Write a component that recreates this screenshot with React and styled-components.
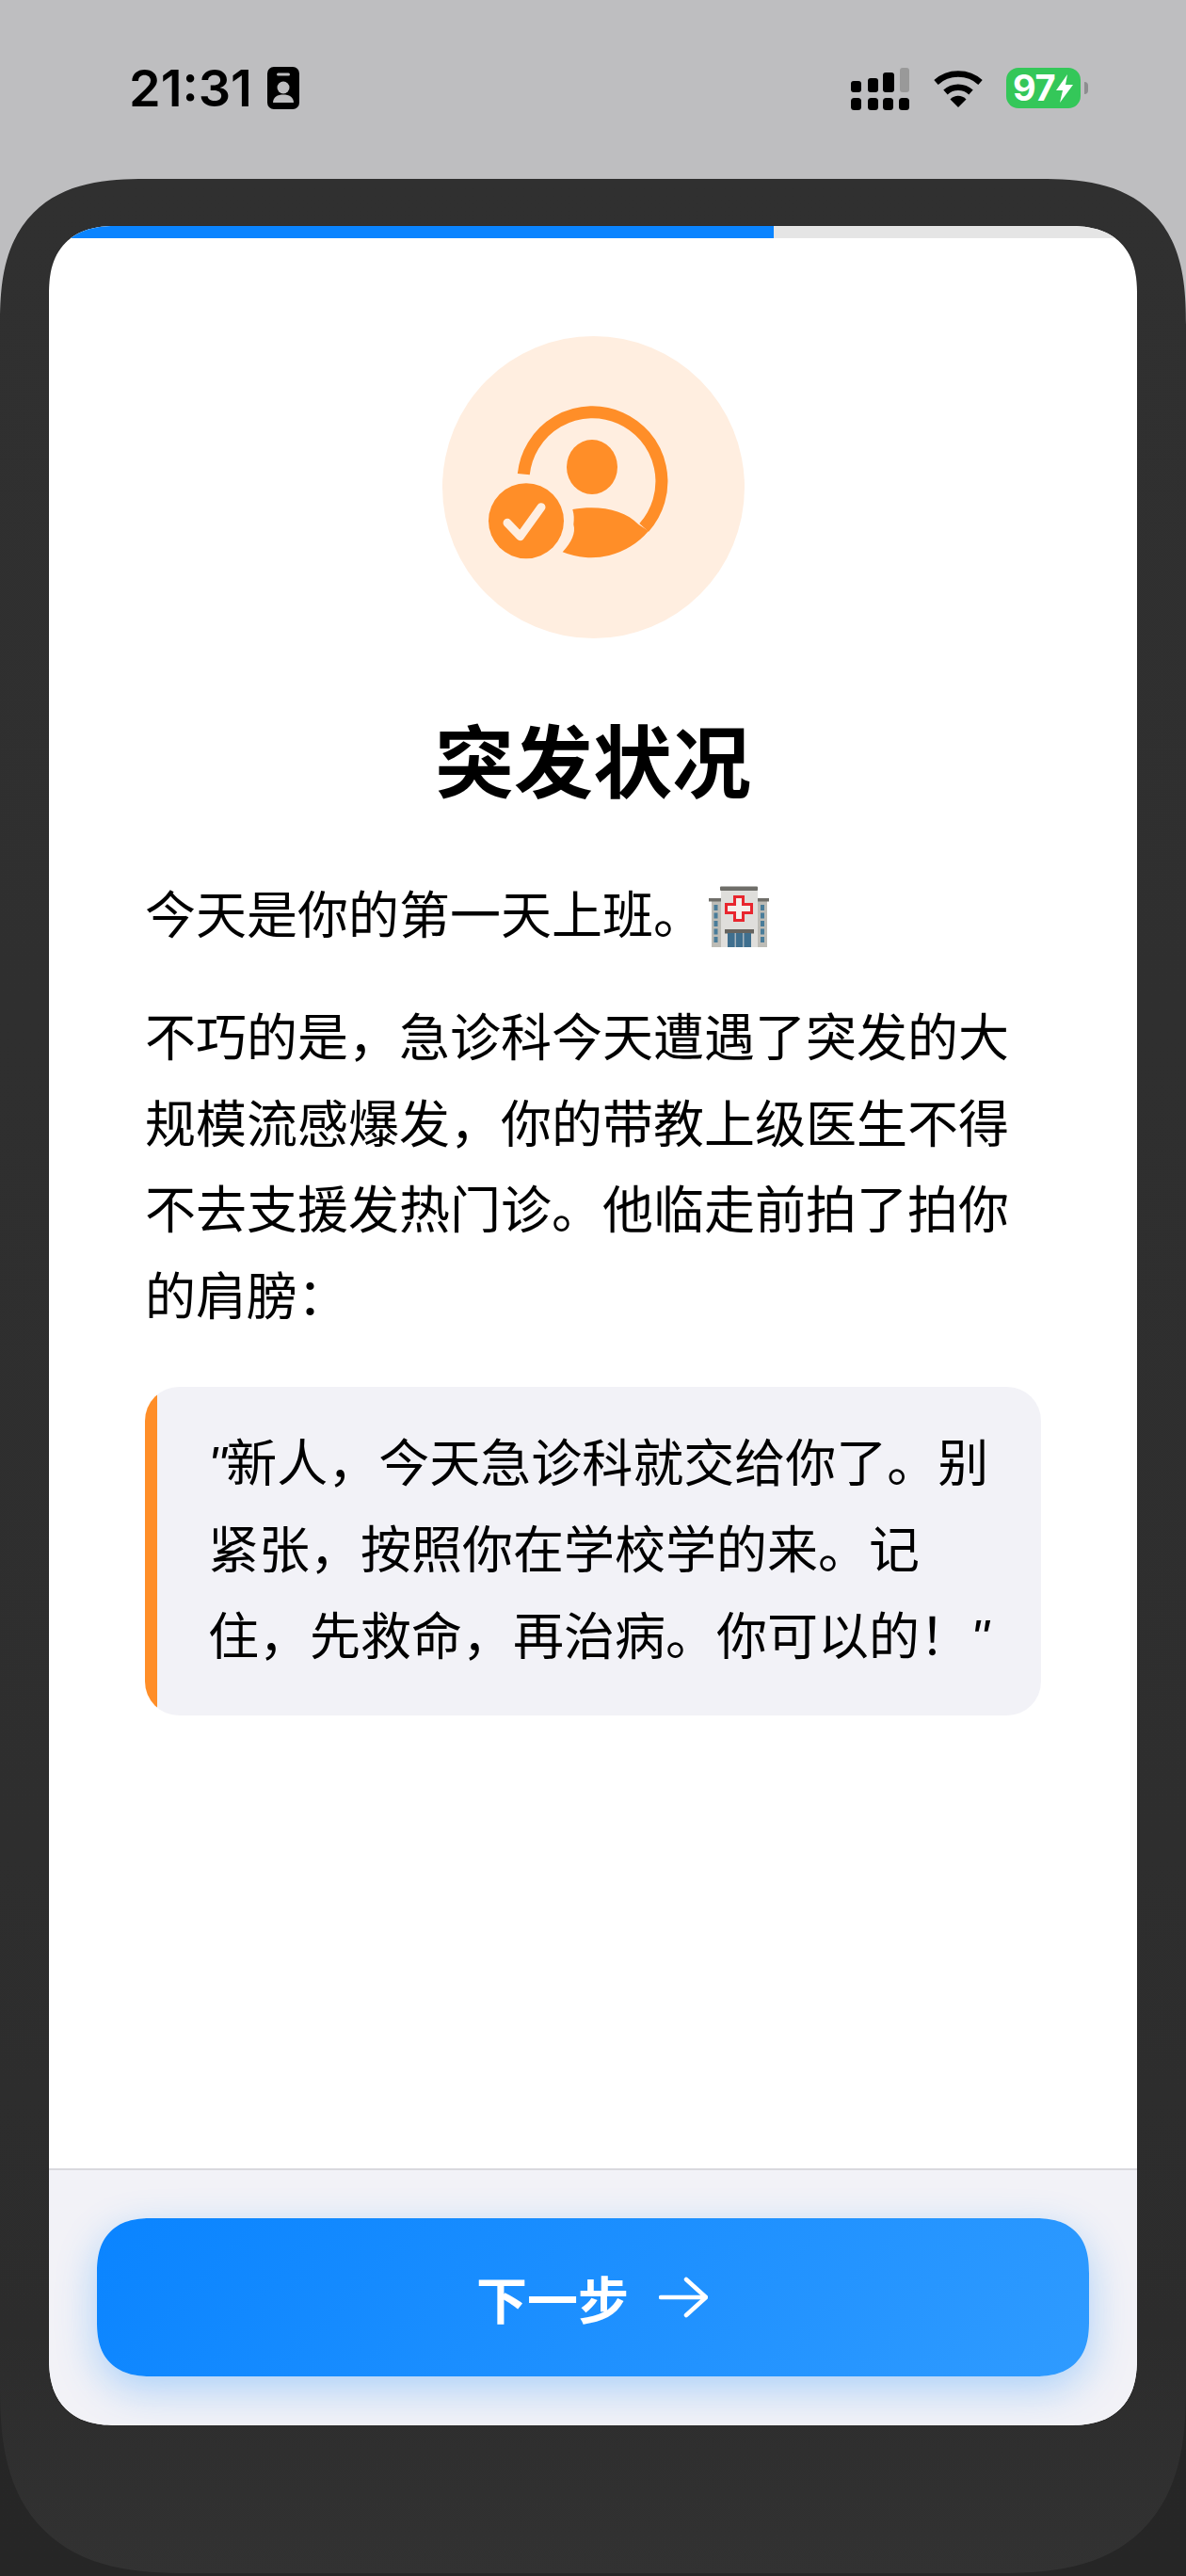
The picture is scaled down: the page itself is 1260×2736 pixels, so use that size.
import React from "react";
import styled, { createGlobalStyle } from "styled-components";

const Global = createGlobalStyle`
  html, body { margin: 0; padding: 0; }
  body {
    width: 1260px;
    height: 2736px;
    overflow: hidden;
    background: linear-gradient(180deg, #bebec0 0, #bebec0 1300px, #272727 1500px, #262626 100%);
    font-family: "Liberation Sans", "Noto Sans CJK SC", sans-serif;
    color: #000;
  }
  * { box-sizing: border-box; }
`;

const Screen = styled.div`
  width: 1260px;
  height: 2733px;
  display: flex;
  flex-direction: column;
`;

const StatusBar = styled.header`
  height: 190px;
  flex: none;
  padding: 71px 112px 0 137px;
  display: flex;
  justify-content: space-between;
  align-items: flex-start;
`;

const TimeGroup = styled.div`
  display: flex;
  align-items: flex-start;
  gap: 16px;
`;

const Time = styled.span`
  font-family: Inter, "Liberation Sans", sans-serif;
  font-weight: 600;
  font-size: 54px;
  line-height: 45px;
  letter-spacing: 0;
  width: 131px;
  white-space: nowrap;
`;

const StatusIcons = styled.div`
  display: flex;
  align-items: flex-start;
`;

const SignalGrid = styled.svg`
  display: block;
  width: 62px;
  height: 45px;
  margin-top: 1px;
`;

const WifiIcon = styled.svg`
  display: block;
  width: 54px;
  height: 41px;
  margin: 2px 24px 0 25px;
`;

const Battery = styled.div`
  width: 79px;
  height: 43px;
  margin-top: 1px;
  border-radius: 13px;
  background: #34c759;
  color: #fff;
  font-family: Inter, "Liberation Sans", sans-serif;
  font-weight: 700;
  font-size: 38px;
  line-height: 43px;
  padding-left: 7px;
  display: flex;
  align-items: center;
  position: relative;
  letter-spacing: -0.5px;
`;

const BatteryCap = styled.span`
  position: absolute;
  right: -8px;
  top: 15px;
  width: 4px;
  height: 13px;
  background: #8e8e90;
  border-radius: 0 6px 6px 0;
`;

const Bolt = styled.svg`
  width: 18px;
  height: 30px;
  margin-left: 1px;
  flex: none;
`;

const Panel = styled.main`
  flex: 1;
  background: linear-gradient(180deg, #303030 0, #2e2e2e 70%, #2c2c2c 90%, #323232 100%);
  border-radius: 155px 155px 200px 200px;
  corner-shape: superellipse(1.4);
  padding: 50px 52px 157px;
  display: flex;
`;

const Card = styled.section`
  flex: 1;
  background: #fff;
  border-radius: 72px;
  corner-shape: superellipse(1.3);
  overflow: hidden;
  box-shadow: 0 0 1px rgba(0, 0, 0, 0.8);
  display: flex;
  flex-direction: column;
`;

const Progress = styled.div`
  height: 13px;
  flex: none;
  background: #e5e5e5;
`;

const ProgressFill = styled.div`
  height: 100%;
  width: ${(p) => p.$value}%;
  background: #0a84ff;
`;

const Content = styled.div`
  flex: 1;
  padding: 104px 102px 0;
  display: flex;
  flex-direction: column;
`;

const Hero = styled.div`
  width: 321px;
  height: 321px;
  border-radius: 50%;
  background: #ffeee0;
  align-self: center;
  flex: none;
`;

const HeroIcon = styled.svg`
  display: block;
  width: 321px;
  height: 321px;
`;

const Title = styled.h1`
  margin: 84px 0 0;
  font-size: 84px;
  line-height: 100px;
  font-weight: 700;
  text-align: center;
`;

const Paragraph = styled.p`
  margin: ${(p) => p.$top}px 0 0;
  font-size: 54px;
  line-height: 91.8px;
  font-weight: 400;
`;

const InlineEmoji = styled.svg`
  width: 64px;
  height: 65px;
  vertical-align: -14px;
  margin-left: 5px;
`;

const Quote = styled.blockquote`
  margin: 48px 0 0;
  padding: 37px 52px 37px 67px;
  background: linear-gradient(90deg, #ff8e28 13px, #f2f2f7 13px);
  border-radius: 36px;
  font-size: 54px;
  line-height: 91.8px;
`;

const QuoteMark = styled.span`
  font-style: italic;
  font-family: "Liberation Sans", sans-serif;
`;

const Footer = styled.footer`
  flex: none;
  height: 273px;
  padding: 51px 51px 52px;
  background: #f2f2f7;
  border-top: 2px solid #d9d9de;
`;

const NextButton = styled.button`
  width: 100%;
  height: 168px;
  border: 0;
  padding: 0 2px 0 0;
  border-radius: 58px;
  corner-shape: superellipse(1.3);
  background: linear-gradient(135deg, #0a84ff, #2f9bff);
  box-shadow: 0 14px 44px rgba(10, 132, 255, 0.3);
  color: #fff;
  font-family: inherit;
  font-size: 54px;
  font-weight: 700;
  display: flex;
  align-items: center;
  justify-content: center;
  gap: 32px;
`;

const ArrowIcon = styled.svg`
  display: block;
  width: 52px;
  height: 44px;
`;

const Hospital = () => (
  <InlineEmoji viewBox="0 0 64 65" aria-hidden="true">
    <rect x="3" y="15" width="12" height="50" fill="#bdbcb6" />
    <rect x="50" y="15" width="12" height="50" fill="#bdbcb6" />
    <rect x="0" y="13" width="14" height="3.5" fill="#6f6e69" />
    <rect x="50" y="13" width="14" height="3.5" fill="#6f6e69" />
    <rect x="13" y="3" width="39" height="62" fill="#dfdedb" />
    <rect x="12" y="0.5" width="40" height="4.5" rx="1" fill="#6f6e69" />
    {[20, 28.5, 37, 45.5, 54].map((y) => (
      <g key={y} fill="#4a7d9a">
        <rect x="5.5" y={y} width="4" height="6" />
        <rect x="55" y={y} width="4" height="6" />
      </g>
    ))}
    <path d="M26 10h12v8h9v12h-9v8H26v-8h-9V18h9z" fill="#e8262e" />
    <path d="M29 13h6v8h9v6h-9v8h-6v-8h-9v-6h9z" fill="#f4efec" />
    <rect x="17" y="46" width="31" height="4.5" fill="#66645f" />
    <rect x="20" y="50" width="25" height="15" fill="#3f6f8e" />
    <rect x="27.5" y="50" width="1.5" height="15" fill="#a5b4bd" />
    <rect x="36" y="50" width="1.5" height="15" fill="#a5b4bd" />
  </InlineEmoji>
);

export default function App() {
  return (
    <>
      <Global />
      <Screen>
        <StatusBar>
          <TimeGroup>
            <Time>21:31</Time>
            <svg width="34" height="45" viewBox="0 0 34 45" aria-hidden="true">
              <rect width="34" height="45" rx="7" fill="#000" />
              <rect x="10" y="6.5" width="14" height="3" rx="1.5" fill="#bebec0" />
              <circle cx="17" cy="22" r="6.5" fill="#bebec0" />
              <path d="M6 38c0-6 5-8.5 11-8.5S28 32 28 38z" fill="#bebec0" />
            </svg>
          </TimeGroup>
          <StatusIcons>
            <SignalGrid viewBox="0 0 62 45" aria-hidden="true">
              <rect x="0" y="14" width="11" height="12" rx="3" />
              <rect x="18" y="11" width="11" height="15" rx="3" />
              <rect x="34" y="5" width="12" height="21" rx="3" />
              <rect x="52" y="0" width="10" height="26" rx="3" fill="#999" />
              <rect x="0" y="32" width="11" height="13" rx="3.5" />
              <rect x="18" y="32" width="11" height="13" rx="3.5" />
              <rect x="34" y="32" width="11" height="13" rx="3.5" />
              <rect x="51" y="32" width="11" height="13" rx="3.5" />
            </SignalGrid>
            <WifiIcon viewBox="0 0 54 41" aria-hidden="true" fill="none" stroke="#000">
              <path d="M3.5 14.5C16.5 2.5 37.5 2.5 50.5 14.5" strokeWidth="6.5" />
              <path d="M13.5 25C21 18 33 18 40.5 25" strokeWidth="6.5" />
              <path d="M18.5 32.5C23 27.500 31 27.500 35.500 32.500L27 41z" fill="#000" stroke="none" />
            </WifiIcon>
            <Battery>
              97
              <Bolt viewBox="0 0 18 30" aria-hidden="true">
                <path d="M12 0L0 17h7l-3 13L18 11h-8z" fill="#fff" />
              </Bolt>
              <BatteryCap />
            </Battery>
          </StatusIcons>
        </StatusBar>
        <Panel>
          <Card>
            <Progress>
              <ProgressFill $value={66.6} />
            </Progress>
            <Content>
              <Hero>
                <HeroIcon viewBox="0 0 321 321" aria-hidden="true">
                  <path
                    d="M86.300 146.700A73.500 73.500 0 1 1 214.200 203.300"
                    fill="none"
                    stroke="#ff8e28"
                    strokeWidth="13"
                  />
                  <ellipse cx="159" cy="139" rx="27" ry="29" fill="#ff8e28" />
                  <path
                    d="M138.300 184C165 179 194 184 208.300 200L219 207A80 80 0 0 1 127.700 229.300C137 219 142 209 139.300 200C140 194 140 190 138.300 184Z"
                    fill="#ff8e28"
                  />
                  <circle cx="89" cy="196.300" r="40" fill="#ff8e28" />
                  <path
                    d="M69 198.300L82.700 212.700L105 181.700"
                    fill="none"
                    stroke="#ffeee0"
                    strokeWidth="9"
                    strokeLinecap="round"
                    strokeLinejoin="round"
                  />
                </HeroIcon>
              </Hero>
              <Title>突发状况</Title>
              <Paragraph $top={66}>
                今天是你的第一天上班。
                <Hospital />
              </Paragraph>
              <Paragraph $top={38}>
                不巧的是，急诊科今天遭遇了突发的大规模流感爆发，你的带教上级医生不得不去支援发热门诊。他临走前拍了拍你的肩膀：
              </Paragraph>
              <Quote>
                <QuoteMark>"</QuoteMark>新人，今天急诊科就交给你了。别紧张，按照你在学校学的来。记住，先救命，再治病。你可以的！
                <QuoteMark>"</QuoteMark>
              </Quote>
            </Content>
            <Footer>
              <NextButton type="button">
                下一步
                <ArrowIcon viewBox="0 0 52 44" aria-hidden="true" fill="none" stroke="#fff" strokeWidth="4.500" strokeLinecap="round" strokeLinejoin="round">
                  <path d="M2 22H49" />
                  <path d="M29 3L50 22L29 41" />
                </ArrowIcon>
              </NextButton>
            </Footer>
          </Card>
        </Panel>
      </Screen>
    </>
  );
}
